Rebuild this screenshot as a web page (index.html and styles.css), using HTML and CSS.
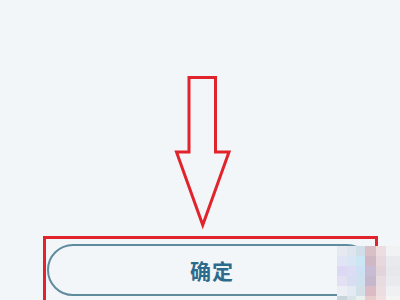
FILE: index.html
```html
<!DOCTYPE html>
<html lang="zh">
  <head>
    <meta charset="UTF-8" />
    <title>确定</title>
    <link rel="stylesheet" href="styles.css">
  </head>
  <body>
    <div class="stage">
      <svg class="arrow" width="66" height="162" viewBox="0 0 66 162">
        <polygon points="19,7.5 45.5,7.5 45.5,82 59,82 32.75,155 6.5,82 19,82" />
      </svg>

      <div class="highlight">
        <button type="button" class="confirm">确定</button>
      </div>

      <div class="mosaic">
        <span style="background:#e6eaf0"></span><span style="background:#dde6ef"></span><span style="background:#d0dee8"></span><span style="background:#d8c0c6"></span><span style="background:#ecdde0"></span><span style="background:#f0f2f4"></span>
        <span style="background:#e0e4f4"></span><span style="background:#d8e6f4"></span><span style="background:#cbe6f4"></span><span style="background:#cfb8c4"></span><span style="background:#e6d8dc"></span><span style="background:#e8eaee"></span>
        <span style="background:#ddd8f4"></span><span style="background:#dcdcf4"></span><span style="background:#cde0f4"></span><span style="background:#c8bcd4"></span><span style="background:#e2d4d8"></span><span style="background:#e6e8ec"></span>
        <span style="background:#e4e0f4"></span><span style="background:#d8def2"></span><span style="background:#cfe0ee"></span><span style="background:#c6b8cc"></span><span style="background:#e8dce0"></span><span style="background:#e8eaee"></span>
        <span style="background:#eceef6"></span><span style="background:#e4eaf2"></span><span style="background:#d4e0e8"></span><span style="background:#dcbcc4"></span><span style="background:#ecdde0"></span><span style="background:#eef0f2"></span>
        <span style="background:#c8d6dc"></span><span style="background:#d8e4e8"></span><span style="background:#e8f0f0"></span><span style="background:#e8cccc"></span><span style="background:#f0e0e0"></span><span style="background:#f4f4f4"></span>
      </div>
    </div>
  </body>
</html>
```

FILE: styles.css
```css
:root {
  --bg-color: #f3f6f9;
  --mark-red: #e1242c;
  --btn-border: #5e8c9e;
  --btn-text: #2d6b8c;
}

* {
  box-sizing: border-box;
}

html,
body {
  margin: 0;
  height: 100%;
  overflow: hidden;
}

body {
  background-color: var(--bg-color);
  font-family: "Noto Sans CJK SC", "Noto Sans", sans-serif;
}

.stage {
  position: relative;
  width: 400px;
  height: 300px;
  padding-top: 70px;
}

.arrow {
  display: block;
  margin-left: 170px;
}

.arrow polygon {
  fill: none;
  stroke: var(--mark-red);
  stroke-width: 3;
  stroke-linejoin: miter;
}

/* red frame is cut by the bottom of the shot */
.highlight {
  margin-top: 4px;
  margin-left: 43px;
  width: 335px;
  height: 64px;
  border: 3px solid var(--mark-red);
  border-bottom: none;
  padding: 5px 0 0 1px;
}

.confirm {
  display: flex;
  align-items: center;
  justify-content: center;
  width: 326px;
  height: 52px;
  border: 2px solid var(--btn-border);
  border-radius: 26px;
  background-color: var(--bg-color);
  color: var(--btn-text);
  font-family: inherit;
  font-size: 21px;
  font-weight: bold;
  letter-spacing: 1px;
  padding: 0 0 0 4px;
}

.mosaic {
  position: absolute;
  left: 337px;
  top: 246px;
  display: grid;
  grid-template-columns: 10px 9px 9px 11px 10px 14px;
  grid-template-rows: repeat(5, 10px) 4px;
}
```
